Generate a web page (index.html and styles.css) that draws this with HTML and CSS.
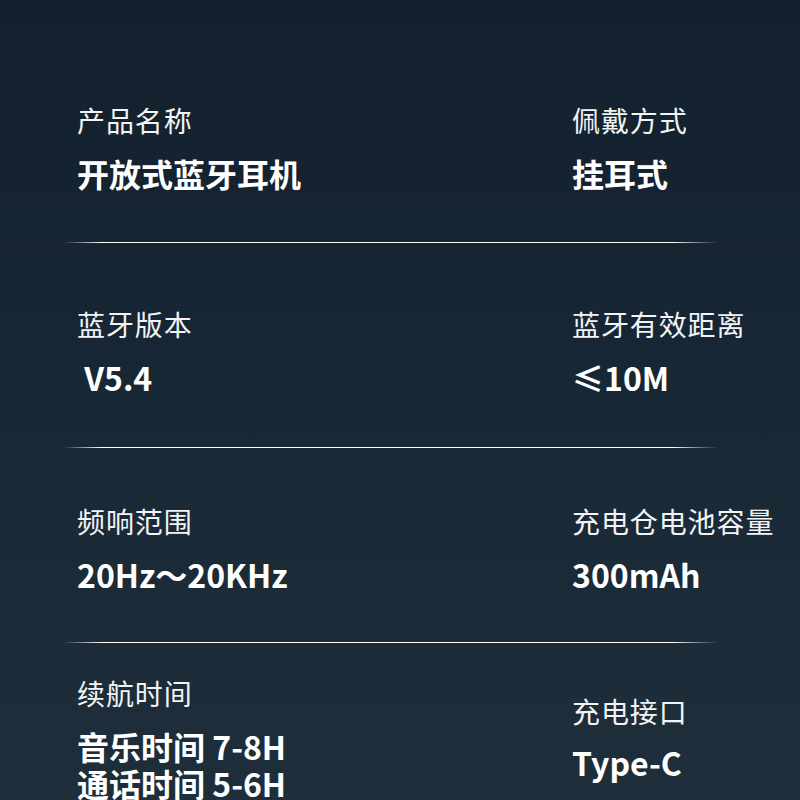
FILE: index.html
```html
<!DOCTYPE html>
<html lang="zh-CN">
<head>
<meta charset="utf-8">
<title>产品参数</title>
<link rel="stylesheet" href="styles.css">
</head>
<body>
<main class="specs">
  <section class="row row-1">
    <div class="cell">
      <div class="label">产品名称</div>
      <div class="value">开放式蓝牙耳机</div>
    </div>
    <div class="cell">
      <div class="label">佩戴方式</div>
      <div class="value">挂耳式</div>
    </div>
  </section>
  <div class="divider"></div>
  <section class="row row-2">
    <div class="cell">
      <div class="label">蓝牙版本</div>
      <div class="value value-big">&nbsp;V5.4</div>
    </div>
    <div class="cell">
      <div class="label">蓝牙有效距离</div>
      <div class="value">≤10M</div>
    </div>
  </section>
  <div class="divider"></div>
  <section class="row row-3">
    <div class="cell">
      <div class="label">频响范围</div>
      <div class="value">20Hz～20KHz</div>
    </div>
    <div class="cell">
      <div class="label">充电仓电池容量</div>
      <div class="value">300mAh</div>
    </div>
  </section>
  <div class="divider"></div>
  <section class="row row-4">
    <div class="cell">
      <div class="label">续航时间</div>
      <div class="value value-multi">音乐时间 7-8H<br>通话时间 5-6H</div>
    </div>
    <div class="cell cell-low">
      <div class="label">充电接口</div>
      <div class="value">Type-C</div>
    </div>
  </section>
</main>
</body>
</html>
```

FILE: styles.css
```css
html, body {
  margin: 0;
  padding: 0;
}
body {
  width: 800px;
  height: 800px;
  overflow: hidden;
  background: linear-gradient(180deg, #13202e 0%, #172634 40%, #1b2b38 75%, #1e2e3a 100%);
  font-family: "Noto Sans CJK SC", "Noto Sans", sans-serif;
  color: #ffffff;
}
.specs {
  display: flex;
  flex-direction: column;
  padding-top: 100px;
}
.row {
  display: grid;
  grid-template-columns: 495px 1fr;
  padding-left: 77px;
}
.row-1 { margin-bottom: 51px; }
.row-2 { margin-top: 61px; margin-bottom: 52px; }
.row-3 { margin-top: 53px; margin-bottom: 50px; }
.row-4 { margin-top: 30px; }
.cell {
  display: flex;
  flex-direction: column;
  gap: 15px;
}
.cell-low {
  padding-top: 18px;
  gap: 13px;
}
.label {
  font-size: 28px;
  line-height: 40px;
  letter-spacing: 0.9px;
  font-weight: 400;
  color: #f2f4f5;
  white-space: nowrap;
}
.value {
  font-size: 32px;
  line-height: 36px;
  font-weight: 700;
  color: #ffffff;
  white-space: nowrap;
}
.value-big {
  font-size: 32px;
  letter-spacing: 0;
}
.value-multi {
  line-height: 37px;
}
.divider {
  margin-left: 63px;
  width: 655px;
  height: 1px;
  background: linear-gradient(90deg, rgba(255,255,255,0) 0%, #ffffff 6%, #ffffff 93%, rgba(255,255,255,0) 100%);
}
```
